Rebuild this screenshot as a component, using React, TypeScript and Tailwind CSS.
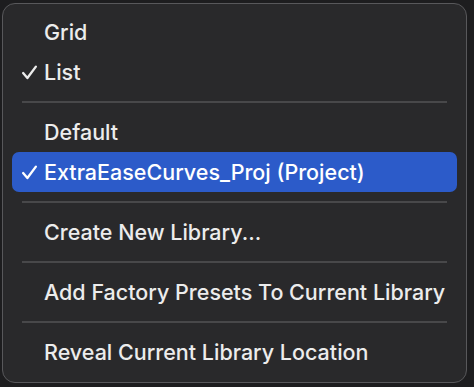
const font = { fontFamily: "Inter, 'Noto Sans', sans-serif" };

function Check() {
  return (
    <svg width="17" height="17" viewBox="0 0 16 16" className="shrink-0">
      <path d="M2 8.5 L6 13.2 L14 2.5" fill="none" stroke="currentColor" strokeWidth="2.2" strokeLinecap="round" strokeLinejoin="round" />
    </svg>
  );
}

function Item({ label, checked, active }: { label: string; checked?: boolean; active?: boolean }) {
  return (
    <div
      className={`mx-[9px] flex h-10 items-center rounded-[7px] pl-[9px] text-[21.5px] font-medium text-[#ececec] ${
        active ? "bg-[#2c5bc9] text-white" : ""
      }`}
    >
      <span className="flex w-[23px] items-center">{checked && <Check />}</span>
      <span>{label}</span>
    </div>
  );
}

function Sep() {
  return (
    <div className="flex h-5 items-center px-[19px]">
      <div className="h-[2px] w-full bg-[#48484a]" />
    </div>
  );
}

export default function App() {
  return (
    <div className="h-[387px] w-[474px] bg-[#1d1d1f] pl-[2px] pt-[3px]" style={font}>
      <div className="flex h-[380px] w-[465px] flex-col rounded-[13px] border-[1.5px] border-[#58585b] bg-[#29292b] pt-[8px]">
        <Item label="Grid" />
        <Item label="List" checked />
        <Sep />
        <Item label="Default" />
        <Item label="ExtraEaseCurves_Proj (Project)" checked active />
        <Sep />
        <Item label="Create New Library..." />
        <Sep />
        <Item label="Add Factory Presets To Current Library" />
        <Sep />
        <Item label="Reveal Current Library Location" />
      </div>
    </div>
  );
}
